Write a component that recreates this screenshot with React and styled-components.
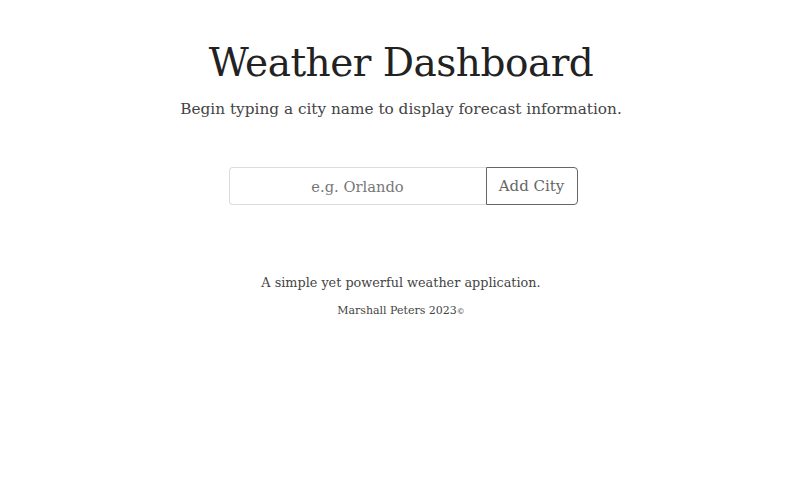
import styled, { createGlobalStyle } from "styled-components";

const GlobalStyle = createGlobalStyle`
  body {
    margin: 0;
    background: #ffffff;
    font-family: "DejaVu Serif", "Liberation Serif", serif;
    color: #333;
  }
`;

const Page = styled.div`
  display: flex;
  flex-direction: column;
  align-items: center;
  padding-top: 40px;
`;

const Title = styled.h1`
  margin: 0;
  font-size: 39px;
  font-weight: 300;
  line-height: 45px;
  color: #222;
  letter-spacing: -0.5px;
`;

const Subtitle = styled.p`
  margin: 15px 0 0;
  font-size: 15.3px;
  line-height: 18px;
  color: #444;
`;

const Form = styled.form`
  display: flex;
  margin-top: 49px;
  margin-left: 4px;
`;

const Input = styled.input`
  width: 257px;
  height: 38px;
  box-sizing: border-box;
  border: 1px solid #dcdcdc;
  border-right: none;
  border-radius: 4px 0 0 4px;
  font-family: inherit;
  font-size: 14.7px;
  text-align: center;
  color: #333;
  outline: none;
  &::placeholder {
    color: #777;
  }
`;

const Button = styled.button`
  width: 92px;
  height: 38px;
  box-sizing: border-box;
  background: #fff;
  border: 1px solid #666;
  border-radius: 0 4px 4px 0;
  font-family: inherit;
  font-size: 15px;
  color: #666;
`;

const Footer = styled.footer`
  display: flex;
  flex-direction: column;
  align-items: center;
  margin-top: 70px;
`;

const Tagline = styled.p`
  margin: 0;
  font-size: 12.8px;
  line-height: 15px;
  color: #444;
`;

const Credit = styled.p`
  margin: 14px 0 0;
  font-size: 11px;
  line-height: 13px;
  color: #444;
`;

const Copy = styled.span`
  font-size: 8px;
`;

const App = () => {
  return (
    <>
      <GlobalStyle />
      <Page>
        <Title>Weather Dashboard</Title>
        <Subtitle>Begin typing a city name to display forecast information.</Subtitle>
        <Form onSubmit={(e) => e.preventDefault()}>
          <Input type="text" placeholder="e.g. Orlando" />
          <Button type="submit">Add City</Button>
        </Form>
        <Footer>
          <Tagline>A simple yet powerful weather application.</Tagline>
          <Credit>
            Marshall Peters 2023<Copy>©</Copy>
          </Credit>
        </Footer>
      </Page>
    </>
  );
};

export default App;
